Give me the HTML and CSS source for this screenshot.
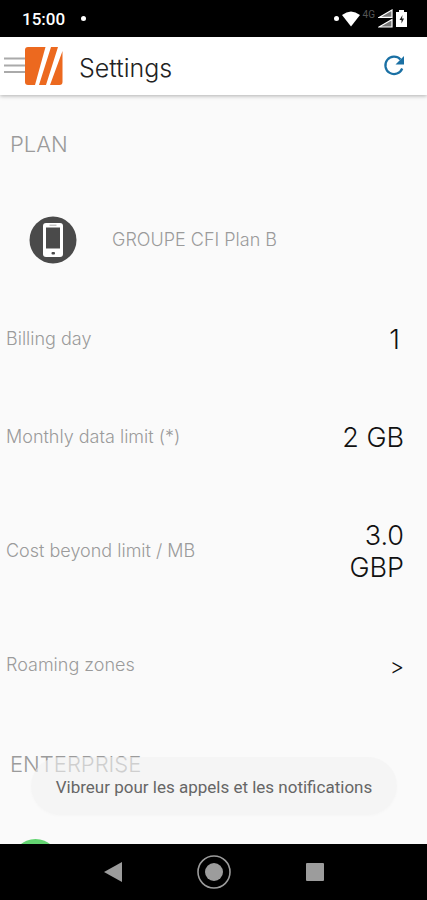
FILE: index.html
```html
<!DOCTYPE html>
<html lang="en">
<head>
<meta charset="utf-8">
<meta name="viewport" content="width=device-width, initial-scale=1">
<title>Settings</title>
<link rel="stylesheet" href="styles.css">
</head>
<body>
<div class="status">
  <span class="clock">15:00</span>
  <span class="dot"></span>
  <div class="status-icons">
    <span class="dot"></span>
    <svg width="18" height="16" viewBox="0 0 18 16" fill="#fff"><path d="M0 4Q9-3 18 4L9 15.500Z"/></svg>
    <span class="network">4G</span>
    <svg class="signal" width="15" height="19" viewBox="0 0 15 19" fill="#777" stroke="#fff" stroke-width="1.200"><path d="M1 8.400 14 1v7.400ZM1 18 14 10.600V18Z"/></svg>
    <svg width="11" height="17" viewBox="0 0 11 17"><path d="M3 0h5v2h3v15H0V2h3Z" fill="#fff"/><path d="M6.500 5 3.500 10h2v3.500L8 8.500H6Z" fill="#222"/></svg>
  </div>
</div>
<header class="bar">
  <button class="menu" aria-label="Menu">
    <svg width="60" height="40" viewBox="0 0 60 40">
      <path d="M0 12.500h22M0 19.500h22M0 26h22" stroke="#aaa" stroke-width="1.800"/>
      <path d="M24 1H41.500L31 39H24Q21 39 21 36V4Q21 1 24 1Z" fill="#ec691f"/>
      <path d="M47 1H54L42 39H35ZM58.500 5V36Q58.500 39 55.500 39H46Z" fill="#ec691f"/>
    </svg>
  </button>
  <h1>Settings</h1>
  <button class="refresh" aria-label="Refresh">
    <svg width="22" height="22" viewBox="0 0 22 22"><path d="M17.500 4.500A8.700 8.700 0 1 0 19.200 13.500" fill="none" stroke="#1a70a4" stroke-width="2.200"/><path d="M21 1V9.500H12.500Z" fill="#1a70a4"/></svg>
  </button>
</header>
<main>
  <h2>PLAN</h2>
  <div class="row plan">
    <svg width="48" height="48" viewBox="0 0 48 48"><circle cx="24" cy="24" r="23.500" fill="#4a4a4a"/><rect x="14" y="7" width="20" height="34" rx="3" fill="#fff"/><path d="M17 11.500h14v21H17Z" fill="#4a4a4a"/><path d="M20.500 9.200h7" stroke="#aaa"/><rect x="22.500" y="36" width="3.500" height="2.500" rx="1" fill="#4a4a4a"/></svg>
    <span>GROUPE CFI Plan B</span>
  </div>
  <div class="row"><span class="label">Billing day</span><span class="value digit">1</span></div>
  <div class="row"><span class="label">Monthly data limit (*)</span><span class="value">2 GB</span></div>
  <div class="row"><span class="label">Cost beyond limit / MB</span><span class="value">3.0 GBP</span></div>
  <a class="row" href="#zones"><span class="label">Roaming zones</span><span class="value chevron">&gt;</span></a>
  <h2>ENTERPRISE</h2>
  <div class="row enterprise"><span class="badge"></span></div>
  <div class="toast" role="status">Vibreur pour les appels et les notifications</div>
</main>
<nav>
  <button aria-label="Back"><svg width="18" height="20" viewBox="0 0 18 20"><path d="M0 10 18 0V20Z" fill="#9c9c9c"/></svg></button>
  <button aria-label="Home"><svg width="34" height="34" viewBox="0 0 34 34"><circle cx="17" cy="17" r="16" fill="none" stroke="#9c9c9c" stroke-width="1.600"/><circle cx="17" cy="17" r="9" fill="#9c9c9c"/></svg></button>
  <button aria-label="Recent apps"><svg width="18" height="18" viewBox="0 0 18 18"><rect width="18" height="18" rx="1" fill="#9c9c9c"/></svg></button>
</nav>
</body>
</html>
```
FILE: styles.css
```css
* { box-sizing: border-box; }
body {
  margin: 0;
  height: 100vh;
  display: flex;
  flex-direction: column;
  background: #fafafa;
  color: #9b9b9b;
  font: 300 18px/32px Inter, "Liberation Sans", sans-serif;
}
button { border: 0; padding: 0; background: none; display: flex; cursor: pointer; }
svg { display: block; flex: none; }
h1, h2 { margin: 0; font-weight: 300; }

.status {
  flex: none;
  height: 37px;
  padding: 0 20px 0 22px;
  display: flex;
  align-items: center;
  background: #000;
  color: #fff;
}
.clock { font: 500 17px/37px Roboto, sans-serif; margin-right: 16px; padding-top: 2px; }
.dot { width: 5px; height: 5px; border-radius: 50%; background: #fff; }
.status-icons { margin-left: auto; display: flex; align-items: center; gap: 3px; }
.network { font: 400 10px/10px Roboto, sans-serif; color: #555; padding-bottom: 8px; }

.bar {
  flex: none;
  height: 58px;
  padding: 0 22px 0 4px;
  display: flex;
  align-items: center;
  background: #fff;
  box-shadow: 0 1px 4px rgba(0, 0, 0, .3);
  z-index: 1;
}
h1 { margin-left: 15px; padding-top: 3px; font-size: 25px; color: #222; }
.refresh { margin-left: auto; }

main { flex: 1; min-height: 0; overflow: hidden; position: relative; }
h2 { padding: 33px 10px; font-size: 22px; }
.row {
  padding: 33px 23px 33px 6px;
  display: flex;
  align-items: center;
  justify-content: space-between;
  color: inherit;
  text-decoration: none;
}
.label { padding-bottom: 2px; margin: -1px 0; }
.plan { justify-content: flex-start; gap: 35px; padding: 23px 29px 27px; }
.value { width: 64px; font-size: 27px; text-align: right; color: #111; }
.digit { padding-right: 4px; }
.chevron { font-size: 22px; }
.enterprise { padding: 26px 12px; }
.badge { width: 47px; height: 47px; border-radius: 50%; background: #63d471; }
.toast {
  position: absolute;
  left: 31px;
  right: 30px;
  bottom: 29px;
  padding: 14px 16px 12px;
  border-radius: 29px;
  background: rgba(241, 241, 241, .6);
  box-shadow: 0 1px 3px rgba(0, 0, 0, .02);
  font: 400 17px/32px Roboto, sans-serif;
  text-align: center;
  color: #666;
}

nav {
  flex: none;
  height: 56px;
  padding: 0 62px;
  display: grid;
  grid-template-columns: repeat(3, 1fr);
  align-items: center;
  justify-items: center;
  background: #000;
}
```
